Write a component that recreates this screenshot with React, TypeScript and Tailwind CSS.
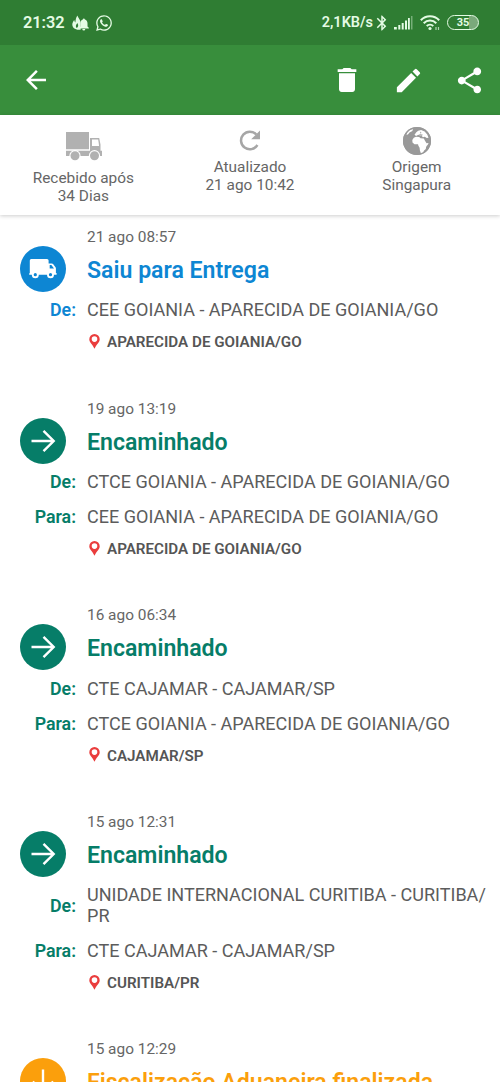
import React from 'react';
import { FaWhatsapp } from 'react-icons/fa';
import { MdArrowBack, MdBluetooth, MdDelete, MdEdit, MdShare } from 'react-icons/md';

type Status = 'delivery' | 'forwarded' | 'customs';

interface TrackingEvent {
  date: string;
  title: string;
  status: Status;
  from?: string;
  to?: string;
  place?: string;
}

const events: TrackingEvent[] = [
  {
    date: '21 ago 08:57',
    title: 'Saiu para Entrega',
    status: 'delivery',
    from: 'CEE GOIANIA - APARECIDA DE GOIANIA/GO',
    place: 'APARECIDA DE GOIANIA/GO',
  },
  {
    date: '19 ago 13:19',
    title: 'Encaminhado',
    status: 'forwarded',
    from: 'CTCE GOIANIA - APARECIDA DE GOIANIA/GO',
    to: 'CEE GOIANIA - APARECIDA DE GOIANIA/GO',
    place: 'APARECIDA DE GOIANIA/GO',
  },
  {
    date: '16 ago 06:34',
    title: 'Encaminhado',
    status: 'forwarded',
    from: 'CTE CAJAMAR - CAJAMAR/SP',
    to: 'CTCE GOIANIA - APARECIDA DE GOIANIA/GO',
    place: 'CAJAMAR/SP',
  },
  {
    date: '15 ago 12:31',
    title: 'Encaminhado',
    status: 'forwarded',
    from: 'UNIDADE INTERNACIONAL CURITIBA - CURITIBA/\nPR',
    to: 'CTE CAJAMAR - CAJAMAR/SP',
    place: 'CURITIBA/PR',
  },
  {
    date: '15 ago 12:29',
    title: 'Fiscalização Aduaneira finalizada',
    status: 'customs',
  },
];

const textColor: Record<Status, string> = {
  delivery: 'text-[#0d86d3]',
  forwarded: 'text-[#067d68]',
  customs: 'text-[#fb9f0c]',
};

const circleColor: Record<Status, string> = {
  delivery: 'bg-[#0d86d3]',
  forwarded: 'bg-[#067d68]',
  customs: 'bg-[#fb9f0c]',
};

const StatusIcon = ({ status }: { status: Status }) => {
  if (status === 'delivery') {
    return (
      <svg width="28" height="20" viewBox="0 0 28 20" fill="#fff">
        <path d="M2.200 0H18a1.600 1.600 0 0 1 1.600 1.600V4.400h3.200a2 2 0 0 1 1.500.8l2.200 3a2 2 0 0 1 .4 1.200V14h.7v1.800H.2V14.200H.8V1.500A1.500 1.500 0 0 1 2.200 0Z" />
        <path d="M20.700 6h1.700l2.600 3.500h-4.300Z" fill="#0d86d3" />
        <circle cx="6.300" cy="15.700" r="3.500" />
        <circle cx="6.300" cy="15.700" r="1.600" fill="#0d86d3" />
        <circle cx="21.500" cy="15.700" r="3.500" />
        <circle cx="21.500" cy="15.700" r="1.600" fill="#0d86d3" />
      </svg>
    );
  }
  return (
    <svg
      width="26"
      height="24"
      viewBox="0 0 26 24"
      fill="none"
      stroke="#fff"
      strokeWidth="2.400"
      className={status === 'customs' ? 'rotate-90' : ''}
    >
      <path d="M1.500 12H24M13.500 1.800 23.700 12 13.500 22.200" />
    </svg>
  );
};

const Pin = () => (
  <svg width="11" height="15" viewBox="0 0 11 15" fill="#ea3d3d" fillRule="evenodd" className="mb-[2px]">
    <path d="M5.500 0a5.200 5.200 0 0 1 5.200 5.200C10.700 8.600 7.500 10 5.500 14.700 3.500 10 .3 8.600.3 5.200A5.200 5.200 0 0 1 5.500 0Zm0 2.300a2.800 2.800 0 1 0 0 5.600 2.800 2.800 0 0 0 0-5.600Z" />
  </svg>
);

const BoxTruck = () => (
  <svg width="36" height="29" viewBox="0 0 36 29" fill="#b1b1b1">
    <path d="M0 0h23v17.300H0ZM0 18.700h24V6h9.200l1.300 6.500v6.200H36V24H0Z" />
    <path d="M26 7.500h6.200l.9 6.500H26Z" fill="#fff" />
    <circle cx="9" cy="23.700" r="5.600" fill="#fff" />
    <circle cx="9" cy="23.700" r="4.500" />
    <circle cx="28.500" cy="23.700" r="5.600" fill="#fff" />
    <circle cx="28.500" cy="23.700" r="4.500" />
  </svg>
);

const Refresh = () => (
  <svg width="22" height="22" viewBox="0 0 22 22">
    <path d="M18.400 15A8.800 8.800 0 1 1 17.300 4.500" fill="none" stroke="#a6a6a6" strokeWidth="2.500" />
    <path d="M21 .5V9.300H12.200Z" fill="#a6a6a6" />
  </svg>
);

// Globo com Europa e África
const Globe = () => (
  <svg width="28" height="28" viewBox="0 0 28 28">
    <circle cx="14" cy="14" r="14" fill="#999" />
    <path
      fill="#fff"
      d="M10.800 10.800 13 9.700l3.200.2 1.300 1.300 3.300.2 1.200 2.300 1.500 2.600 2-.2c-.2 1.500-1.500 2.500-2.400 3.800l-.3 2.200-1.700 1.300-1.300 2.500-1.800.6-1.100-3-.3-2.800-1.200-2-.4-1.500-3.500.1-2-1.800-.2-2.500ZM11.500 7.700l1.800-2.500 1.900-1.500 2.900-.6 3.500 1.300 2.700 3.200 1.200 3.200-1.700.2-2.100-1.300-1.800.6-1.300-1.500-1.500.3-1.200-1.200-1.700.3-1.100.9ZM4.200 5.500l2.500-2.700 3.200-.9-.5 2.100-2.900 1.500-1.600 2-1.500.2Z"
    />
    <path d="M15.500 7.800l2-.6 2.500.6-1.300 1-2.800-.2ZM17.500 4.500l1 1.400-1.400.6Z" fill="#999" />
    <circle cx="14" cy="14" r="13.400" fill="none" stroke="#999" strokeWidth="1.200" />
  </svg>
);

const StatusBar = () => (
  <div className="flex h-[45px] shrink-0 items-center justify-between bg-[#2f7d33] pl-[23px] pr-[21px] text-[#e4fbe4]">
    <div className="flex items-center">
      <span className="text-[16.3px] font-semibold leading-5">21:32</span>
      <svg width="17" height="16" viewBox="0 0 17 16" fill="currentColor" className="ml-[7px]">
        <path
          fillRule="evenodd"
          d="M5.500.5C6 3 8.600 4.500 8.600 8v6.700C3.500 15.500.3 13 .3 9.600.3 7.500 1.500 6 2.300 5c.2 1.400.5 2 1.100 2.500C3.500 5 4 2.500 5.500.5ZM5.400 8C4 9.700 3.200 11.300 4.600 13c1.700-.7 2.200-2.700.8-5Z"
        />
        <path d="M11.800 3.600c.6 0 1 .3 1.100.9 1.700.6 2.600 2 2.600 3.900v3l1.300 1.400v.7H7.200v-.7l1.200-1.400v-3c0-1.900.8-3.300 2.400-3.900.1-.6.500-.9 1-.9Zm-1.500 10.500h3a1.500 1.500 0 0 1-3 0Z" />
      </svg>
      <FaWhatsapp size={18} className="ml-[6px]" />
    </div>
    <div className="flex items-center">
      <span className="text-[14.5px] font-semibold leading-5">2,1KB/s</span>
      <MdBluetooth size={18} />
      <svg width="19" height="14" viewBox="0 0 19 14" fill="currentColor" className="ml-[3px]">
        <path d="M0 11h2.800v2.500H0ZM4.300 9h2v4.500h-2ZM7.700 7h2v6.500h-2ZM11 4.500h2v9h-2ZM14 2h1.800v11.500H14Z" />
        <path d="M17 0h1.500v13.500H17Z" opacity=".4" />
      </svg>
      <svg width="20" height="17" viewBox="0 0 20 17" fill="none" stroke="currentColor" strokeWidth="2" className="ml-[7px]">
        <path d="M.8 6.300C5.800 1 14.200 1 19.200 6.300M3.700 9.200c3.500-3.500 9.100-3.500 12.600 0M6.700 12c1.900-1.800 4.700-1.800 6.600 0" />
        <circle cx="10" cy="14.500" r="1.600" fill="currentColor" stroke="none" />
        <path d="M16 13v3M18.500 13v3" strokeWidth="1.200" opacity=".7" />
      </svg>
      <div className="ml-[7px] flex h-[15px] w-8 items-center justify-center rounded-full border-[1.5px] border-current bg-linear-to-r from-transparent from-70% to-[#7aa97b] to-70% text-[11px] font-bold leading-none">
        35
      </div>
    </div>
  </div>
);

const Toolbar = () => (
  <div className="flex h-[70px] shrink-0 items-center justify-between bg-[#388e3c] pl-[21px] pr-[15px] text-white">
    <MdArrowBack size={30} />
    <div className="flex items-center">
      <MdDelete size={32} />
      <MdEdit size={31} className="ml-[30px]" />
      <MdShare size={31} className="ml-[30px]" />
    </div>
  </div>
);

interface SummaryItemProps {
  icon: React.ReactNode;
  label: string;
  value: string;
}

const SummaryItem = ({ icon, label, value }: SummaryItemProps) => (
  <div className="flex flex-1 flex-col items-center text-center text-[15.4px] leading-[18px] text-[#666]">
    {icon}
    <span>{label}</span>
    <span>{value}</span>
  </div>
);

const AddressRow = ({ label, value, color }: { label: string; value: string; color: string }) => (
  <div className="mt-[13.6px] flex items-center">
    <span className={`w-[76px] shrink-0 text-right text-[17.8px] font-semibold leading-[21px] ${color}`}>{label}</span>
    <span className="ml-[11px] whitespace-pre text-[18.05px] leading-[21.1px] text-[#5c5c5c]">{value}</span>
  </div>
);

const EventItem = ({ event }: { event: TrackingEvent }) => (
  <div className="pb-[48.2px]">
    <div className="ml-[87px] text-[15.4px] leading-[18px] text-[#666]">{event.date}</div>
    <div className="flex h-[46px] items-center">
      <div className={`ml-5 flex size-[46px] shrink-0 items-center justify-center rounded-full ${circleColor[event.status]}`}>
        <StatusIcon status={event.status} />
      </div>
      <h2 className={`ml-[21px] mt-1 whitespace-nowrap text-[23.1px] font-semibold leading-7 ${textColor[event.status]}`}>
        {event.title}
      </h2>
    </div>
    <div className="-mt-[6px]">
      {event.from && <AddressRow label="De:" value={event.from} color={textColor[event.status]} />}
      {event.to && <AddressRow label="Para:" value={event.to} color={textColor[event.status]} />}
    </div>
    {event.place && (
      <div className="ml-[89px] mt-[13px] flex h-[18px] items-center">
        <Pin />
        <span className="ml-[7px] text-[15.2px] font-semibold leading-[18px] text-[#555]">{event.place}</span>
      </div>
    )}
  </div>
);

const App: React.FC = () => {
  return (
    <div className="flex h-[1082px] w-[500px] flex-col overflow-hidden bg-white font-[Roboto,sans-serif]">
      <StatusBar />
      <Toolbar />
      {/* Resumo da encomenda */}
      <div className="z-10 flex h-[100px] shrink-0 bg-white shadow-[0_1px_4px_rgba(0,0,0,0.2)]">
        <SummaryItem icon={<div className="mb-2 ml-[2px] mt-[17px]"><BoxTruck /></div>} label="Recebido após" value="34 Dias" />
        <SummaryItem icon={<div className="mb-[6px] mt-[15px]"><Refresh /></div>} label="Atualizado" value="21 ago 10:42" />
        <SummaryItem icon={<div className="mb-[3px] mt-[12px]"><Globe /></div>} label="Origem" value="Singapura" />
      </div>
      {/* Histórico */}
      <div className="h-0 grow pt-[12.8px]">
        {events.map((event) => (
          <EventItem key={event.date} event={event} />
        ))}
      </div>
    </div>
  );
};

export default App;
